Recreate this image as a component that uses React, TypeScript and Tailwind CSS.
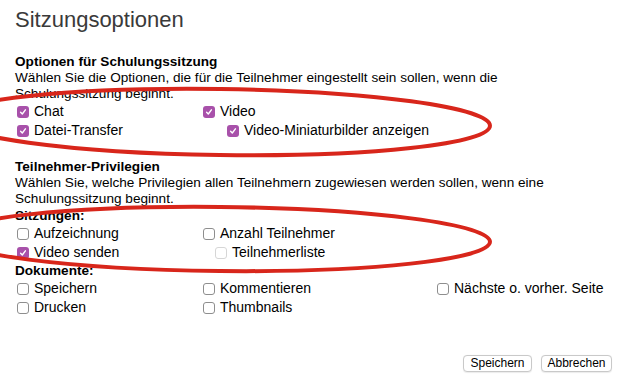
import React from 'react';

type Item = { label: string; checked?: boolean; disabled?: boolean; indent?: string };

function Box({ checked, disabled }: { checked?: boolean; disabled?: boolean }) {
  if (checked) {
    return (
      <span className="flex h-[12px] w-[12px] shrink-0 items-center justify-center rounded-[3px] bg-[#a851aa]">
        <svg width="8" height="8" viewBox="0 0 8 8">
          <path d="M1.6 4.2 L3.3 6 L6.4 1.8" fill="none" stroke="white" strokeWidth="1.4" strokeLinecap="round" strokeLinejoin="round" />
        </svg>
      </span>
    );
  }
  return (
    <span
      className={
        'h-[12px] w-[12px] shrink-0 rounded-[3px] border bg-white ' +
        (disabled ? 'border-[#d6d6d6]' : 'border-[#8e8e8e]')
      }
    />
  );
}

function Check({ item }: { item: Item }) {
  return (
    <div className={'flex h-[19px] items-center gap-[5px] ' + (item.indent ?? '')}>
      <Box checked={item.checked} disabled={item.disabled} />
      <span className="whitespace-nowrap text-[14px]">{item.label}</span>
    </div>
  );
}

function Grid({ rows }: { rows: (Item | null)[][] }) {
  return (
    <div className="grid grid-cols-[186px_234px_1fr] pl-[2px]">
      {rows.flat().map((it, i) => (it ? <Check key={i} item={it} /> : <div key={i} />))}
    </div>
  );
}

export default function App() {
  return (
    <div
      className="relative flex h-[386px] w-[621px] flex-col overflow-hidden bg-white text-[13.6px] text-black"
      style={{ fontFamily: '"Liberation Sans", Arial, sans-serif' }}
    >
      <div className="px-[15px]">
        <h1 className="mt-[6px] text-[22px] leading-[28px] text-[#3a3a3a]">Sitzungsoptionen</h1>

        <div className="mt-[20px] leading-[16px]">
          <div className="font-bold">Optionen für Schulungssitzung</div>
          <div>
            Wählen Sie die Optionen, die für die Teilnehmer eingestellt sein sollen, wenn die
            <br />
            Schulungssitzung beginnt.
          </div>
        </div>
        <Grid
          rows={[
            [{ label: 'Chat', checked: true }, { label: 'Video', checked: true }, null],
            [
              { label: 'Datei-Transfer', checked: true },
              { label: 'Video-Miniaturbilder anzeigen', checked: true, indent: 'ml-[24px]' },
              null,
            ],
          ]}
        />

        <div className="mt-[19px] leading-[16px]">
          <div className="font-bold">Teilnehmer-Privilegien</div>
          <div>
            Wählen Sie, welche Privilegien allen Teilnehmern zugewiesen werden sollen, wenn eine
            <br />
            Schulungssitzung beginnt.
          </div>
        </div>
        <div className="font-bold leading-[17px]">Sitzungen:</div>
        <Grid
          rows={[
            [{ label: 'Aufzeichnung' }, { label: 'Anzahl Teilnehmer' }, null],
            [
              { label: 'Video senden', checked: true },
              { label: 'Teilnehmerliste', disabled: true, indent: 'ml-[12px]' },
              null,
            ],
          ]}
        />
        <div className="font-bold leading-[17px]">Dokumente:</div>
        <Grid
          rows={[
            [{ label: 'Speichern' }, { label: 'Kommentieren' }, { label: 'Nächste o. vorher. Seite' }],
            [{ label: 'Drucken' }, { label: 'Thumbnails' }, null],
          ]}
        />
      </div>

      <div className="mt-auto flex justify-end gap-[9px] pb-[14px] pr-[9px] text-[12px]">
        <button className="h-[17px] w-[69px] rounded-[4px] border border-[#c9c9c9] bg-white leading-[15px] shadow-[0_0.5px_1px_rgba(0,0,0,0.08)]">
          Speichern
        </button>
        <button className="h-[17px] w-[71px] rounded-[4px] border border-[#c9c9c9] bg-white leading-[15px] shadow-[0_0.5px_1px_rgba(0,0,0,0.08)]">
          Abbrechen
        </button>
      </div>

      {/* hand-drawn red annotations */}
      <svg className="pointer-events-none absolute left-0 top-0" width="621" height="386">
        <ellipse cx="220" cy="122" rx="270" ry="33" fill="none" stroke="#d8261b" strokeWidth="4" transform="rotate(0.8 220 122)" />
        <ellipse cx="220" cy="239" rx="270" ry="32" fill="none" stroke="#d8261b" strokeWidth="4" transform="rotate(0.6 220 239)" />
      </svg>
    </div>
  );
}
